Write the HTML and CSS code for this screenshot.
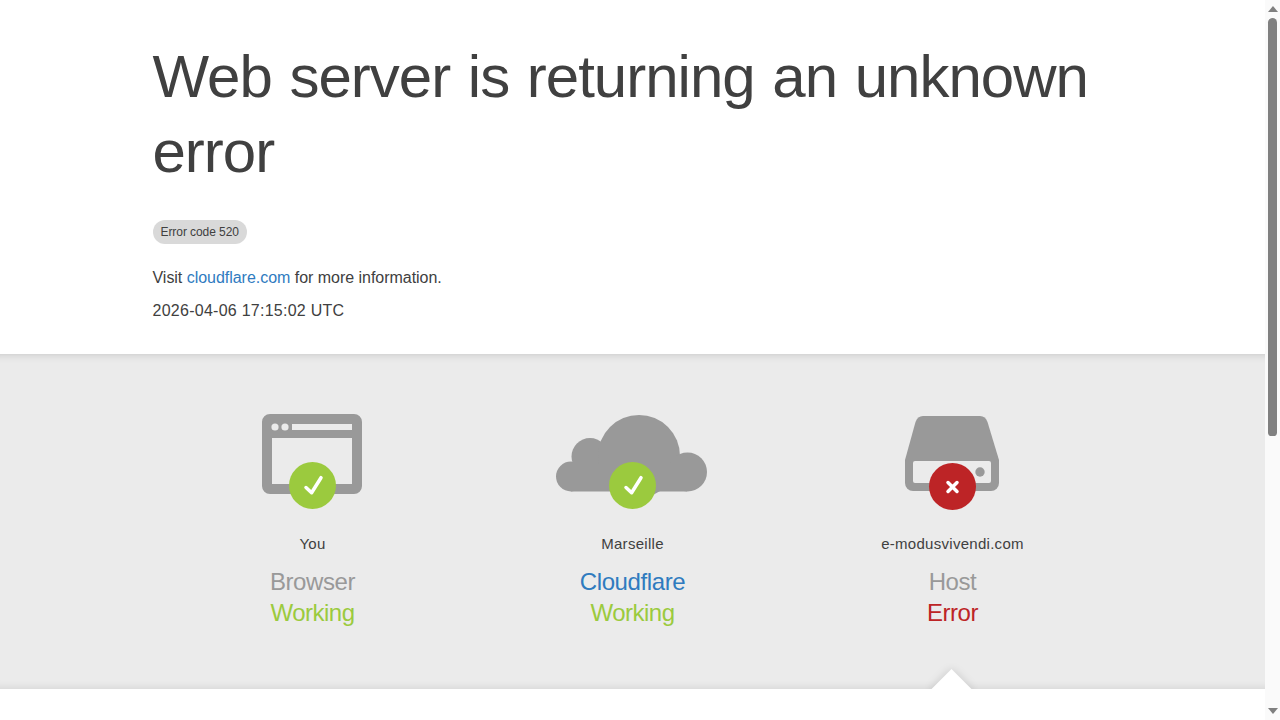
FILE: index.html
```html
<!DOCTYPE html>
<html lang="en">
<head>
<meta charset="utf-8">
<title>Error 520</title>
<link rel="stylesheet" href="styles.css">
</head>
<body>
<div class="page">
  <main class="main">
    <header class="head">
      <div class="wrap">
        <h1 class="title">Web server is returning an unknown error</h1>
        <div class="badge-row"><span class="badge">Error code 520</span></div>
        <p class="visit">Visit <a class="link" href="#">cloudflare.com</a> for more information.</p>
        <p class="time">2026-04-06 17:15:02 UTC</p>
      </div>
    </header>
    <section class="band">
      <div class="wrap cols">
        <div class="col">
          <svg class="icon" width="160" height="100" viewBox="1 0 160 100">
            <path class="shape" fill-rule="evenodd" d="M38 0h84a8 8 0 0 1 8 8v64a8 8 0 0 1-8 8H38a8 8 0 0 1-8-8V8a8 8 0 0 1 8-8zM40 24v46h80V24zM60 10v6h60v-6z"/>
            <circle class="hole" cx="43" cy="13" r="3.6"/>
            <circle class="hole" cx="53" cy="13" r="3.6"/>
            <circle class="ok" cx="80.500" cy="71.500" r="23.500"/>
            <path class="mark" d="M74 73.500l5.600 5.200 9.400-15"/>
          </svg>
          <div class="place">You</div>
          <div class="name">Browser</div>
          <div class="state good">Working</div>
        </div>
        <div class="col">
          <svg class="icon" width="160" height="100" viewBox="1 0 160 100">
            <g class="shape">
              <circle cx="19" cy="62.500" r="15"/>
              <circle cx="38" cy="42.500" r="18.500"/>
              <circle cx="87" cy="42" r="41"/>
              <circle cx="135.500" cy="58" r="19.500"/>
              <rect x="19" y="50" width="116" height="27.500"/>
            </g>
            <circle class="ok" cx="80.500" cy="71.500" r="23.500"/>
            <path class="mark" d="M74 73.500l5.600 5.200 9.400-15"/>
          </svg>
          <div class="place">Marseille</div>
          <a class="name name-link" href="#">Cloudflare</a>
          <div class="state good">Working</div>
        </div>
        <div class="col">
          <svg class="icon" width="160" height="100" viewBox="1 0 160 100">
            <path class="shape" d="M51 2H108Q113.500 2 115.500 8L127 46V69a8 8 0 0 1-8 8H41a8 8 0 0 1-8-8V46L43.500 8Q45.500 2 51 2z"/>
            <rect class="hole" x="41" y="47" width="78" height="22" rx="2"/>
            <circle class="shape" cx="108" cy="58" r="4.700"/>
            <circle class="bad" cx="80.500" cy="72.500" r="23.500"/>
            <path class="mark" d="M76 68.500l9 9m0-9l-9 9"/>
          </svg>
          <div class="place">e-modusvivendi.com</div>
          <div class="name">Host</div>
          <div class="state err">Error</div>
          <span class="pointer"></span>
        </div>
      </div>
    </section>
    <div class="foot"></div>
  </main>
  <aside class="bar" aria-hidden="true">
    <span class="arrow-up"></span>
    <span class="thumb"></span>
    <span class="arrow-down"></span>
  </aside>
</div>
</body>
</html>
```
FILE: styles.css
```css
* { box-sizing: border-box; }
html, body { margin: 0; height: 100%; overflow: hidden; }
body { font-family: "Liberation Sans", Arial, sans-serif; color: #404040; background: #fff; }
.page { display: flex; height: 720px; }
.main { flex: 1; min-width: 0; overflow: hidden; display: flex; flex-direction: column; }
.wrap { width: 960px; margin: 0 auto; }
.head { height: 354px; padding-top: 39px; }
.title { margin: 0; font-size: 60px; line-height: 75px; font-weight: 400; letter-spacing: -1px; word-spacing: 2px; }
.badge-row { margin-top: 31px; height: 24px; display: flex; }
.badge { display: inline-flex; align-items: center; height: 24px; padding: 0 8px; border-radius: 12px; background: #d9d9d9; font-size: 12px; letter-spacing: -.07px; }
.visit { margin: 22px 0 0; font-size: 16px; line-height: 24px; letter-spacing: -.03px; }
.time { margin: 9px 0 0; font-size: 16px; line-height: 24px; letter-spacing: .26px; }
.link { color: #2f7bbf; text-decoration: none; }
.band { height: 335px; background: #ebebeb; overflow: hidden; box-shadow: inset 0 10px 10px -10px rgba(0,0,0,.18), inset 0 -10px 10px -10px rgba(0,0,0,.12); padding-top: 60px; }
.cols { display: grid; grid-template-columns: repeat(3, 1fr); }
.col { position: relative; height: 275px; display: flex; flex-direction: column; align-items: center; text-align: center; }
.icon { display: block; }
.shape { fill: #999; }
.hole { fill: #ebebeb; }
.ok { fill: #9bca3e; }
.bad { fill: #bd2426; }
.mark { fill: none; stroke: #fff; stroke-width: 3.500; stroke-linecap: round; stroke-linejoin: round; }
.place { margin-top: 20px; font-size: 15px; line-height: 20px; letter-spacing: .28px; }
.name { margin-top: 13px; font-size: 24px; line-height: 30px; color: #999; text-decoration: none; letter-spacing: -.4px; }
.name-link { color: #2f7bbf; }
.state { margin-top: 1px; font-size: 24px; line-height: 30px; letter-spacing: -.5px; }
.good { color: #9bca3e; }
.err { color: #bd2426; }
.pointer { position: absolute; left: 50%; bottom: -15px; width: 29px; height: 29px; margin-left: -15.250px; background: #fff; transform: rotate(45deg); box-shadow: 0 0 10px rgba(0,0,0,.15); }
.foot { flex: 1; background: #fff; }
.bar { flex: 0 0 15px; background: #fafafa; position: relative; display: flex; flex-direction: column; align-items: center; }
.arrow-up { margin-top: 6px; width: 0; height: 0; border-left: 5px solid transparent; border-right: 5px solid transparent; border-bottom: 6px solid #7f7f7f; }
.thumb { margin-top: 6px; width: 9px; height: 418px; border-radius: 5px 5px 4px 4px; background: #808080; }
.arrow-down { margin-top: auto; margin-bottom: 6px; width: 0; height: 0; border-left: 5px solid transparent; border-right: 5px solid transparent; border-top: 6px solid #7f7f7f; }
```
